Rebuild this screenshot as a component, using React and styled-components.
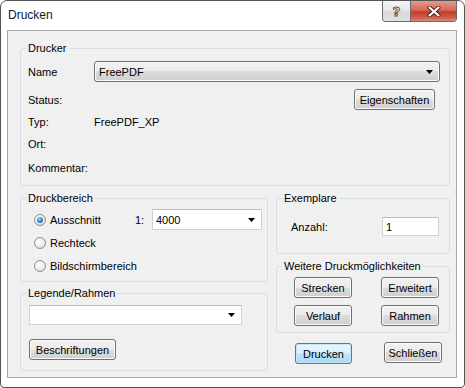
import React from 'react'
import styled, { createGlobalStyle } from 'styled-components'

const GlobalStyle = createGlobalStyle`
  html, body {
    margin: 0;
    padding: 0;
    background: #fff;
  }
  body {
    font-family: "Liberation Sans", Arial, sans-serif;
    font-size: 11px;
    color: #000;
  }
`

const Window = styled.div`
  box-sizing: border-box;
  width: 465px;
  height: 388px;
  border: 1px solid #555;
  border-radius: 7px 7px 4px 4px;
  background: #fff;
  padding: 0 7px 9px 6px;
  display: flex;
  flex-direction: column;
`

const TitleBar = styled.div`
  height: 29px;
  display: flex;
  justify-content: space-between;
  align-items: flex-start;
`

const Title = styled.div`
  margin: 7px 0 0 1px;
  font-size: 12px;
  line-height: 15px;
  color: #0b1a33;
`

const Caption = styled.div`
  display: flex;
  height: 20px;
  border: 1px solid #6a6a6a;
  border-top: none;
  border-radius: 0 0 4px 4px;
  overflow: hidden;
`

const CaptionBtn = styled.div`
  width: ${p => p.$w}px;
  display: flex;
  align-items: center;
  justify-content: center;
  background: ${p => p.$close
    ? 'linear-gradient(#e49c8c 0%, #d46a55 45%, #c23e28 55%, #cf624c 85%, #df8d7b 100%)'
    : 'linear-gradient(#f6f6f6 0%, #e8e8e8 45%, #d8d8d8 55%, #e2e2e2 100%)'};
  border-left: ${p => p.$close ? '1px solid #6a6a6a' : 'none'};
`

const Help = styled.span`
  font-family: "DejaVu Sans", sans-serif;
  font-weight: bold;
  font-size: 13px;
  line-height: 13px;
  color: #f4f4f4;
  -webkit-text-stroke: 0.9px #505050;
`

const Client = styled.div`
  flex: 1;
  border: 1px solid #a8a8a8;
  background: #f0f0f0;
  padding: 11px 6px 0 12px;
`

const Group = styled.fieldset`
  margin: 0;
  padding: 0;
  min-width: 0;
  border: 1px solid #d5dfe5;
  border-radius: 3px;
`

const Legend = styled.legend`
  margin-left: 5px;
  padding: 0 2px;
  line-height: 13px;
`

const GroupBody = styled.div`
  padding: ${p => p.$pad};
`

const Row = styled.div`
  display: grid;
  grid-template-columns: ${p => p.$cols || '66px 1fr'};
  align-items: center;
  height: ${p => p.$h || 20}px;
  margin-top: ${p => p.$mt || 0}px;
`

const Combo = styled.div`
  box-sizing: border-box;
  width: ${p => p.$w ? `${p.$w}px` : 'auto'};
  height: ${p => p.$h || 21}px;
  display: flex;
  align-items: center;
  justify-content: space-between;
  padding: 0 6px 0 ${p => p.$edit ? 3 : 4}px;
  border: 1px solid ${p => p.$edit ? '#d2d2d2' : '#707070'};
  border-top-color: ${p => p.$edit ? '#bdbdbd' : '#707070'};
  border-radius: ${p => p.$edit ? 0 : 3}px;
  background: ${p => p.$edit
    ? '#fff'
    : 'linear-gradient(#f2f2f2 0%, #ebebeb 50%, #dddddd 50%, #cfcfcf 100%)'};
  box-shadow: ${p => p.$edit ? 'none' : 'inset 0 0 0 1px #fbfbfb'};
`

const TextBox = styled.div`
  box-sizing: border-box;
  width: 57px;
  height: 19px;
  padding-left: 3px;
  display: flex;
  align-items: center;
  background: #fff;
  border: 1px solid #d2d2d2;
  border-top-color: #bdbdbd;
  justify-self: end;
`

const Button = styled.button`
  box-sizing: border-box;
  width: ${p => p.$w}px;
  height: 21px;
  padding: 0;
  margin: ${p => p.$mt || 0}px ${p => p.$mr || 0}px 0 0;
  font: inherit;
  color: #000;
  border: 1px solid ${p => p.$default ? '#3c7fb1' : '#707070'};
  border-radius: 3px;
  background: ${p => p.$default
    ? 'linear-gradient(#eaf6fd 0%, #d9f0fc 50%, #bee6fd 50%, #a7d9f5 100%)'
    : 'linear-gradient(#f2f2f2 0%, #ebebeb 50%, #dddddd 50%, #cfcfcf 100%)'};
  box-shadow: inset 0 0 0 1px ${p => p.$default ? '#c3e6fa' : '#fbfbfb'};
  justify-self: ${p => p.$end ? 'end' : 'start'};
`

const Lower = styled.div`
  display: grid;
  grid-template-columns: 248px 174px;
  column-gap: 8px;
  margin-top: 6px;
`

const Column = styled.div`
  display: flex;
  flex-direction: column;
  gap: ${p => p.$gap}px;
`

const RadioLabel = styled.label`
  display: flex;
  align-items: center;
  gap: 4px;
`

const RadioDot = styled.span`
  box-sizing: border-box;
  width: 12px;
  height: 12px;
  border-radius: 50%;
  border: 1px solid #8f8f8f;
  background: radial-gradient(circle at 40% 35%, #ffffff 0%, #ececec 55%, #cfcfcf 100%);
  display: flex;
  align-items: center;
  justify-content: center;

  &::after {
    content: '';
    display: ${p => p.$checked ? 'block' : 'none'};
    width: 6px;
    height: 6px;
    border-radius: 50%;
    background: radial-gradient(circle at 40% 35%, #9fe0ff 0%, #2a86d4 50%, #0b3f7a 100%);
  }
`

const ButtonGrid = styled.div`
  display: grid;
  grid-template-columns: 58px 58px;
  justify-content: space-between;
  row-gap: 7px;
  padding: 4px 10px 6px 17px;
`

const Actions = styled.div`
  display: flex;
  justify-content: space-between;
  align-items: flex-start;
  margin-top: 3px;
  padding: 0 8px 0 19px;
`

const Arrow = () => (
  <svg width="7" height="4" viewBox="0 0 7 4">
    <path d="M0 0h7L3.5 4z" fill="#000" />
  </svg>
)

const CloseX = () => (
  <svg width="14" height="11" viewBox="0 0 14 11">
    <path d="M2.5 1.5l9 8M11.5 1.5l-9 8" stroke="#4a1a12" strokeWidth="4" strokeLinecap="round" />
    <path d="M2.5 1.5l9 8M11.5 1.5l-9 8" stroke="#fff" strokeWidth="2.2" strokeLinecap="round" />
  </svg>
)

const Radio = ({ checked, children }) => (
  <RadioLabel>
    <RadioDot $checked={checked} />
    {children}
  </RadioLabel>
)

export default function App() {
  return (
    <>
      <GlobalStyle />
      <Window>
        <TitleBar>
          <Title>Drucken</Title>
          <Caption>
            <CaptionBtn $w={27}><Help>?</Help></CaptionBtn>
            <CaptionBtn $w={45} $close><CloseX /></CaptionBtn>
          </Caption>
        </TitleBar>

        <Client>
          <Group>
            <Legend>Drucker</Legend>
            <GroupBody $pad="6px 9px 7px 7px">
              <Row $h={21}>
                <span>Name</span>
                <Combo>
                  <span>FreePDF</span>
                  <Arrow />
                </Combo>
              </Row>
              <Row $h={21} $mt={7}>
                <span>Status:</span>
                <Button $w={81} $end $mr={5}>Eigenschaften</Button>
              </Row>
              <Row $mt={2}>
                <span>Typ:</span>
                <span>FreePDF_XP</span>
              </Row>
              <Row $mt={2}>
                <span>Ort:</span>
                <span />
              </Row>
              <Row $mt={4}>
                <span>Kommentar:</span>
                <span />
              </Row>
            </GroupBody>
          </Group>

          <Lower>
            <Column $gap={5}>
              <Group>
                <Legend>Druckbereich</Legend>
                <GroupBody $pad="4px 0 5px 13px">
                  <Row $h={21} $cols="101px 17px 110px">
                    <Radio checked>Ausschnitt</Radio>
                    <span>1:</span>
                    <Combo $edit>
                      <span>4000</span>
                      <Arrow />
                    </Combo>
                  </Row>
                  <Row $h={21} $mt={2} $cols="1fr">
                    <Radio>Rechteck</Radio>
                  </Row>
                  <Row $h={21} $mt={2} $cols="1fr">
                    <Radio>Bildschirmbereich</Radio>
                  </Row>
                </GroupBody>
              </Group>

              <Group>
                <Legend>Legende/Rahmen</Legend>
                <GroupBody $pad="5px 0 10px 8px">
                  <Combo $edit $w={213} $h={20}>
                    <span />
                    <Arrow />
                  </Combo>
                  <Row $h={21} $mt={14} $cols="1fr">
                    <Button $w={87}>Beschriftungen</Button>
                  </Row>
                </GroupBody>
              </Group>
            </Column>

            <Column $gap={6}>
              <Group>
                <Legend>Exemplare</Legend>
                <GroupBody $pad="12px 10px 17px 14px">
                  <Row $h={19} $cols="1fr auto">
                    <span>Anzahl:</span>
                    <TextBox>1</TextBox>
                  </Row>
                </GroupBody>
              </Group>

              <Group>
                <Legend>Weitere Druckmöglichkeiten</Legend>
                <ButtonGrid>
                  <Button $w={58}>Strecken</Button>
                  <Button $w={58}>Erweitert</Button>
                  <Button $w={58}>Verlauf</Button>
                  <Button $w={58}>Rahmen</Button>
                </ButtonGrid>
              </Group>

              <Actions>
                <Button $w={57} $mt={1} $default>Drucken</Button>
                <Button $w={58}>Schließen</Button>
              </Actions>
            </Column>
          </Lower>
        </Client>
      </Window>
    </>
  )
}
